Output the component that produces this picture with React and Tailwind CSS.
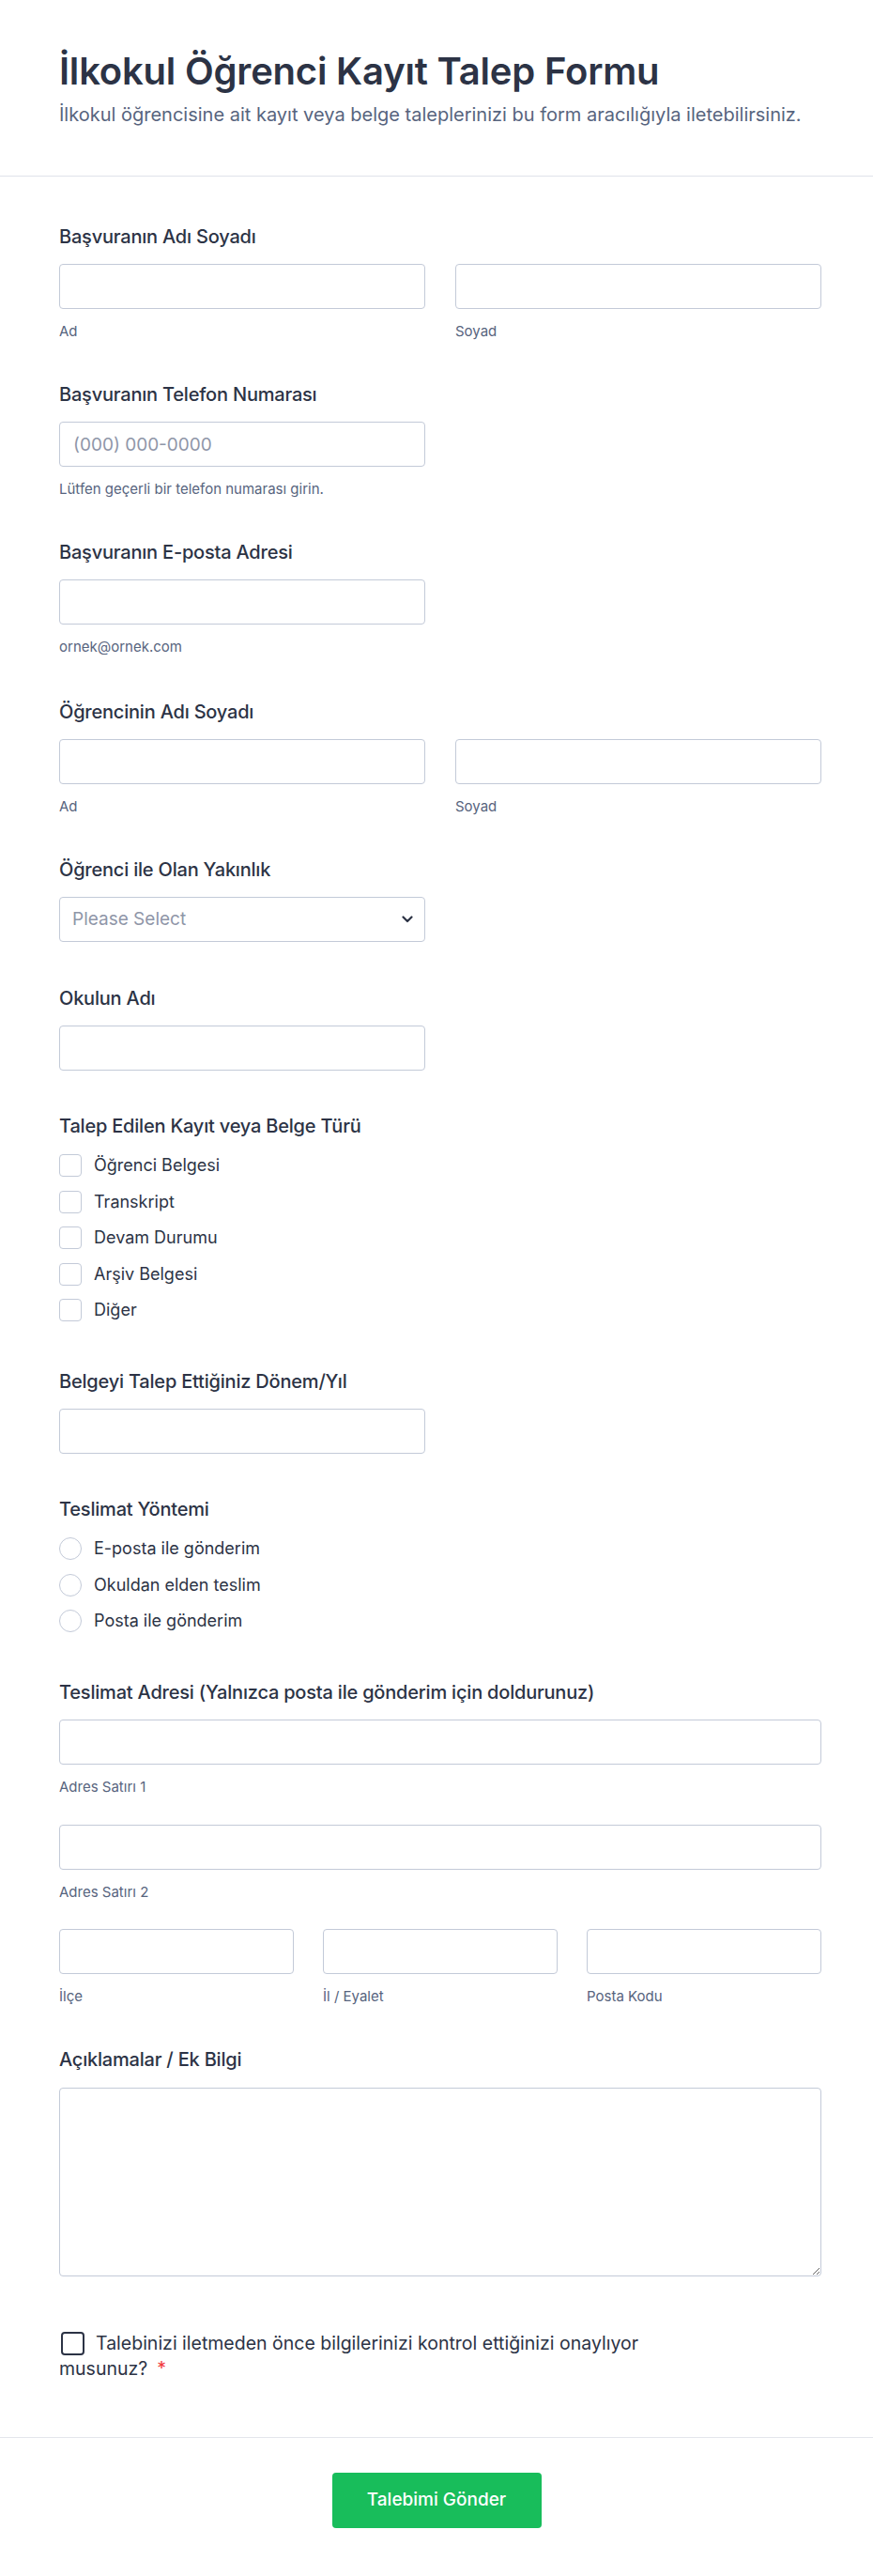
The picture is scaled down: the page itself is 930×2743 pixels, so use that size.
import { useState } from 'react';

const inputCls =
  'w-full h-12 rounded-[4px] border border-[#c3cad8] bg-white px-[14px] text-[19px] text-[#2c3345] outline-none placeholder:text-[#8f96a8]';

function Label({ children }) {
  return (
    <div className="text-[20px] leading-6 font-medium tracking-[-0.2px] text-[#2c3345]">{children}</div>
  );
}

function Sub({ children }) {
  return <div className="mt-[14px] text-[15px] leading-5 text-[#57647e]">{children}</div>;
}

function Field({ label, className = '', children }) {
  return (
    <div className={className}>
      <Label>{label}</Label>
      <div className="mt-[17px]">{children}</div>
    </div>
  );
}

function Box({ sub, placeholder }) {
  return (
    <div>
      <input className={inputCls} placeholder={placeholder} />
      {sub && <Sub>{sub}</Sub>}
    </div>
  );
}

export default function App() {
  const [checked, setChecked] = useState({});
  const [method, setMethod] = useState('');
  const [confirmed, setConfirmed] = useState(false);

  const docTypes = ['Öğrenci Belgesi', 'Transkript', 'Devam Durumu', 'Arşiv Belgesi', 'Diğer'];
  const methods = ['E-posta ile gönderim', 'Okuldan elden teslim', 'Posta ile gönderim'];

  return (
    <div className="min-h-screen bg-white font-['Inter',sans-serif] text-[#2c3345]">
      {/* Header */}
      <header className="pl-[63px] pr-[55px] pt-[52px] pb-[53px] border-b border-[#dfe2ea]">
        <h1 className="text-[40px] leading-[48px] font-semibold tracking-[-0.2px] text-[#2c3345]">
          İlkokul Öğrenci Kayıt Talep Formu
        </h1>
        <p className="mt-[10px] text-[20px] leading-6 text-[#57647e]">
          İlkokul öğrencisine ait kayıt veya belge taleplerinizi bu form aracılığıyla iletebilirsiniz.
        </p>
      </header>

      {/* Form body */}
      <div className="pl-[63px] pr-[55px] pt-[52px] pb-[59px] flex flex-col">
        <Field label="Başvuranın Adı Soyadı">
          <div className="grid grid-cols-2 gap-[32px]">
            <Box sub="Ad" />
            <Box sub="Soyad" />
          </div>
        </Field>

        <Field label="Başvuranın Telefon Numarası" className="mt-[45px]">
          <div className="w-[390px]">
            <Box placeholder="(000) 000-0000" sub="Lütfen geçerli bir telefon numarası girin." />
          </div>
        </Field>

        <Field label="Başvuranın E-posta Adresi" className="mt-[45px]">
          <div className="w-[390px]">
            <Box sub="ornek@ornek.com" />
          </div>
        </Field>

        <Field label="Öğrencinin Adı Soyadı" className="mt-[47px]">
          <div className="grid grid-cols-2 gap-[32px]">
            <Box sub="Ad" />
            <Box sub="Soyad" />
          </div>
        </Field>

        <Field label="Öğrenci ile Olan Yakınlık" className="mt-[45px]">
          <div className="relative w-[390px]">
            <select
              defaultValue=""
              className="w-full h-12 appearance-none rounded-[4px] border border-[#c3cad8] bg-white px-[13px] text-[19px] text-[#8f96a8] outline-none"
            >
              <option value="">Please Select</option>
              <option>Anne</option>
              <option>Baba</option>
              <option>Vasi</option>
            </select>
            <svg
              className="pointer-events-none absolute right-[13px] top-[20px]"
              width="12"
              height="8"
              viewBox="0 0 12 8"
              fill="none"
            >
              <path d="M1.5 1.5 6 6l4.5-4.5" stroke="#2c3345" strokeWidth="2.2" strokeLinecap="round" strokeLinejoin="round" />
            </svg>
          </div>
        </Field>

        <Field label="Okulun Adı" className="mt-[48px]">
          <div className="w-[390px]">
            <Box />
          </div>
        </Field>

        <div className="mt-[47px]">
          <Label>Talep Edilen Kayıt veya Belge Türü</Label>
          <div className="mt-[18px] flex flex-col gap-[14.5px]">
            {docTypes.map((d) => (
              <label key={d} className="flex items-center gap-[13px] cursor-pointer">
                <input
                  type="checkbox"
                  className="peer sr-only"
                  checked={!!checked[d]}
                  onChange={() => setChecked({ ...checked, [d]: !checked[d] })}
                />
                <span className="w-6 h-6 rounded-[4px] border border-[#c3cad8] bg-white peer-checked:bg-[#2e69ff] peer-checked:border-[#2e69ff]" />
                <span className="text-[18px] leading-6 text-[#2c3345]">{d}</span>
              </label>
            ))}
          </div>
        </div>

        <Field label="Belgeyi Talep Ettiğiniz Dönem/Yıl" className="mt-[52px]">
          <div className="w-[390px]">
            <Box />
          </div>
        </Field>

        <div className="mt-[47px]">
          <Label>Teslimat Yöntemi</Label>
          <div className="mt-[18px] flex flex-col gap-[14.5px]">
            {methods.map((m) => (
              <label key={m} className="flex items-center gap-[13px] cursor-pointer">
                <input
                  type="radio"
                  name="method"
                  className="peer sr-only"
                  checked={method === m}
                  onChange={() => setMethod(m)}
                />
                <span className="w-6 h-6 rounded-full border border-[#c3cad8] bg-white peer-checked:border-[7px] peer-checked:border-[#2e69ff]" />
                <span className="text-[18px] leading-6 text-[#2c3345]">{m}</span>
              </label>
            ))}
          </div>
        </div>

        <div className="mt-[52px]">
          <Label>Teslimat Adresi (Yalnızca posta ile gönderim için doldurunuz)</Label>
          <div className="mt-[17px] flex flex-col">
            <Box sub="Adres Satırı 1" />
            <div className="mt-[30px]">
              <Box sub="Adres Satırı 2" />
            </div>
            <div className="mt-[29px] grid grid-cols-3 gap-[31px]">
              <Box sub="İlçe" />
              <Box sub="İl / Eyalet" />
              <Box sub="Posta Kodu" />
            </div>
          </div>
        </div>

        <div className="mt-[45px]">
          <Label>Açıklamalar / Ek Bilgi</Label>
          <textarea className="mt-[18px] block w-full h-[201px] rounded-[4px] border border-[#c3cad8] bg-white px-[14px] py-3 text-[19px] text-[#2c3345] outline-none" />
        </div>

        <label className="block w-[680px] mt-[58px] text-[19.5px] leading-[27px] text-[#2c3345] cursor-pointer">
          <input
            type="checkbox"
            className="sr-only"
            checked={confirmed}
            onChange={() => setConfirmed(!confirmed)}
          />
          <span
            className={
              'inline-block align-[-6px] w-[25px] h-[25px] mr-[12px] ml-[2px] rounded-[4px] border-2 border-[#2c3345] ' +
              (confirmed ? 'bg-[#2c3345]' : 'bg-white')
            }
          />
          Talebinizi iletmeden önce bilgilerinizi kontrol ettiğinizi onaylıyor musunuz?
          <span className="ml-[10px] text-[#f23a3c]">*</span>
        </label>
      </div>

      {/* Footer */}
      <footer className="border-t border-[#e3e5ec] pt-[37px] pb-[50px] flex justify-center">
        <button className="w-[223px] h-[59px] rounded-[4px] bg-[#18bd5b] text-white text-[19px] font-medium">
          Talebimi Gönder
        </button>
      </footer>
    </div>
  );
}
